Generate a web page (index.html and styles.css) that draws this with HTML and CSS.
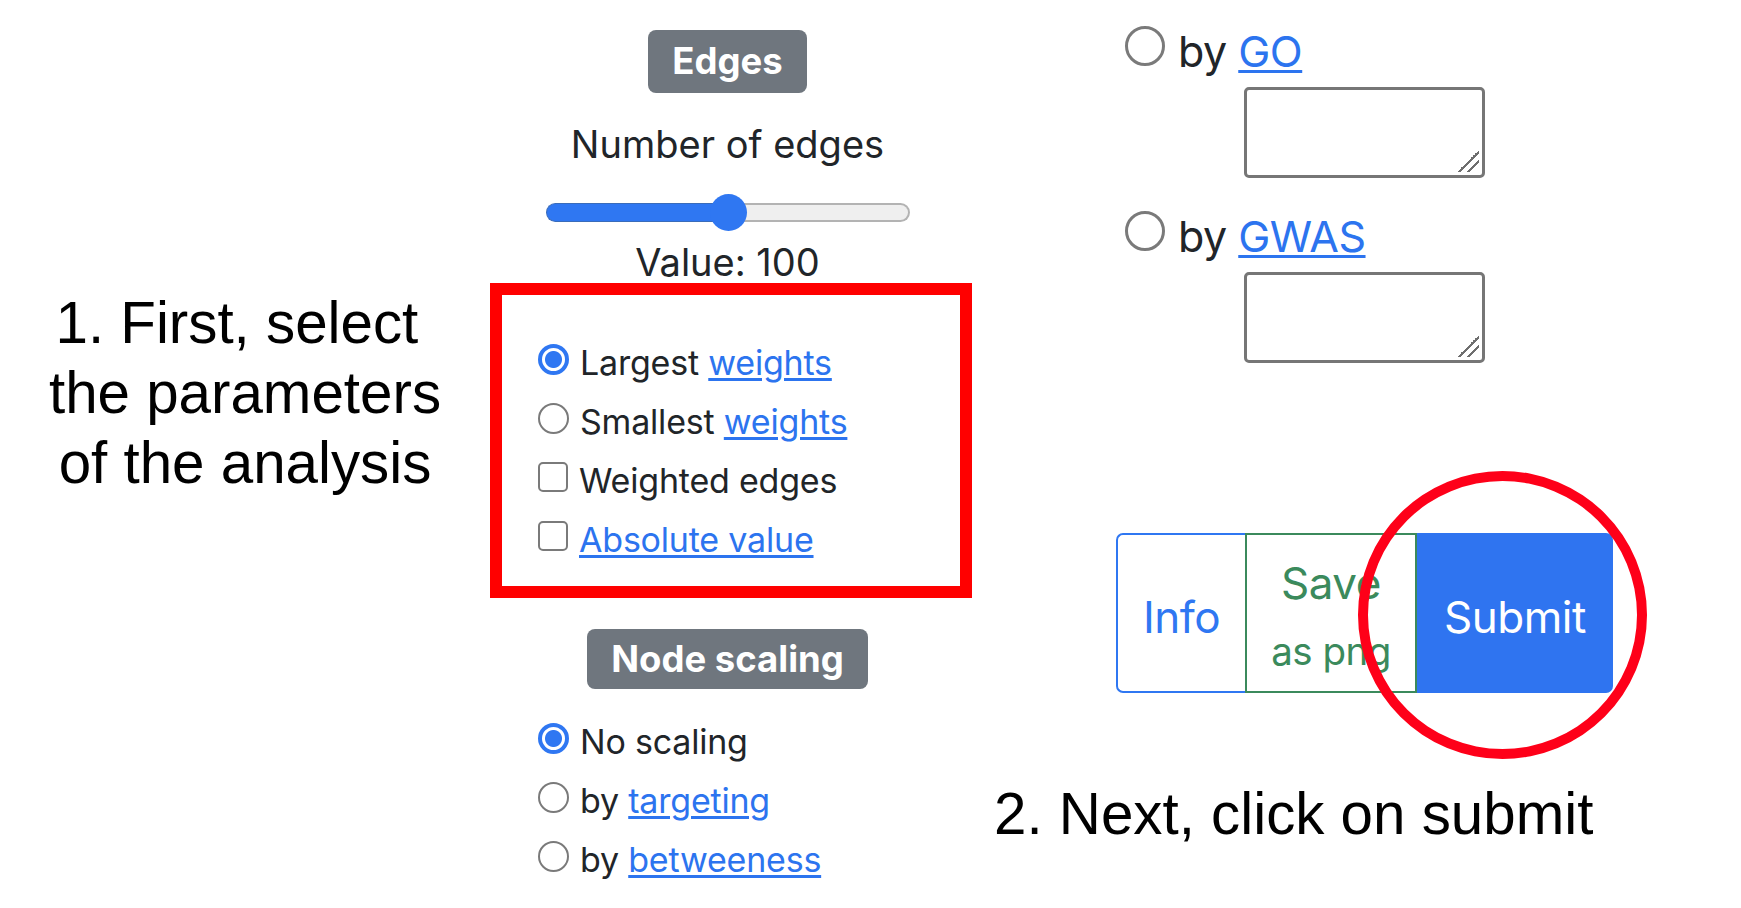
FILE: index.html
```html
<!DOCTYPE html>
<html lang="en">
<head>
<meta charset="utf-8">
<title>Analysis parameters</title>
<link rel="stylesheet" href="styles.css">
</head>
<body>
<div class="canvas">
  <div class="note note-left">1. First, select&nbsp;<br>the parameters<br>of the analysis</div>

  <div class="col-mid">
    <div class="center">
      <span class="badge">Edges</span>
      <div class="label label-num">Number of edges</div>
      <div class="track"><div class="fill"></div><div class="thumb"></div><div class="rest"></div></div>
      <div class="label label-value">Value: 100</div>
    </div>

    <div class="highlight">
      <label class="row"><input class="radio" type="radio" name="w" checked><span>Largest <a href="#">weights</a></span></label>
      <label class="row"><input class="radio" type="radio" name="w"><span>Smallest <a href="#">weights</a></span></label>
      <label class="row"><input class="check" type="checkbox"><span>Weighted edges</span></label>
      <label class="row"><input class="check" type="checkbox"><span><a href="#">Absolute value</a></span></label>
    </div>

    <div class="center center-node">
      <span class="badge">Node scaling</span>
    </div>
    <div class="node-list">
      <label class="row"><input class="radio" type="radio" name="n" checked><span>No scaling</span></label>
      <label class="row"><input class="radio" type="radio" name="n"><span>by <a href="#">targeting</a></span></label>
      <label class="row"><input class="radio" type="radio" name="n"><span>by <a href="#">betweeness</a></span></label>
    </div>
  </div>

  <div class="col-right">
    <label class="opt-row"><input class="radio big" type="radio" name="n"><span>by <a href="#">GO</a></span></label>
    <textarea class="area"></textarea>
    <label class="opt-row opt-second"><input class="radio big" type="radio" name="n"><span>by <a href="#">GWAS</a></span></label>
    <textarea class="area"></textarea>

    <div class="btn-group">
      <button class="btn btn-info" type="button">Info</button>
      <button class="btn btn-save" type="button"><span class="save-top">Save</span><span class="save-sub">as png</span></button>
      <button class="btn btn-submit" type="button">Submit</button>
      <div class="ring"></div>
    </div>

    <div class="note note-bottom">2. Next, click on submit</div>
  </div>
</div>
</body>
</html>
```

FILE: styles.css
```css
html, body {
  margin: 0;
  padding: 0;
  background: #ffffff;
}

.canvas {
  display: flex;
  width: 1741px;
  height: 908px;
  overflow: hidden;
  font-family: "Inter", "Noto Sans", sans-serif;
  color: #212529;
}

.note {
  font-family: "Liberation Sans", Arial, sans-serif;
  font-size: 58.3px;
  line-height: 70px;
  color: #000;
  white-space: nowrap;
}

.note-left {
  flex: 0 0 490px;
  box-sizing: border-box;
  padding-top: 288px;
  text-align: center;
}

/* middle column */
.col-mid {
  flex: 0 0 482px;
  display: flex;
  flex-direction: column;
}

.center {
  padding-top: 30px;
  padding-right: 7px;
  display: flex;
  flex-direction: column;
  align-items: center;
}

.badge {
  display: inline-block;
  background: #6f767e;
  color: #fff;
  font-weight: 700;
  font-size: 36.5px;
  height: 63px;
  line-height: 63px;
  padding: 0 24px;
  border-radius: 8px;
}

.label {
  font-size: 38px;
  line-height: 46px;
  white-space: nowrap;
}

.label-num {
  margin-top: 28px;
}

.track {
  margin-top: 27px;
  width: 364px;
  height: 37px;
  display: flex;
  align-items: center;
}

.fill {
  flex: 0 0 182px;
  height: 19px;
  box-sizing: border-box;
  background: #2f77f2;
  border: 1.5px solid #3a6cba;
  border-right: 0;
  border-radius: 10px 0 0 10px;
  margin-right: -18px;
}

.thumb {
  flex: 0 0 37px;
  height: 37px;
  border-radius: 50%;
  background: #2f77f2;
  position: relative;
  z-index: 1;
}

.rest {
  flex: 1;
  height: 19px;
  box-sizing: border-box;
  background: #efefef;
  border: 2px solid #b3b3b3;
  border-left: 0;
  border-radius: 0 10px 10px 0;
  margin-left: -18px;
}

.label-value {
  margin-top: 10px;
  line-height: 42px;
}

.highlight {
  height: 315px;
  box-sizing: border-box;
  border: 12px solid #ff0000;
  padding: 38px 0 0 36px;
}

.row {
  display: flex;
  align-items: flex-start;
  height: 59px;
  font-size: 34px;
  letter-spacing: -0.2px;
  line-height: 59px;
  white-space: nowrap;
}

.row span {
  margin-left: 11px;
}

a {
  color: #2c74ef;
  text-decoration: underline;
  text-decoration-thickness: 2.5px;
  text-underline-offset: 3px;
}

.radio, .check {
  -webkit-appearance: none;
  appearance: none;
  flex: 0 0 auto;
  margin: 10.5px 0 0 0;
  box-sizing: border-box;
  width: 31px;
  height: 31px;
  background: #fff;
  border: 2.5px solid #7a7a7a;
}

.radio {
  border-radius: 50%;
}

.radio:checked {
  border: 4px solid #2f77f2;
  background: radial-gradient(circle at center, #2f77f2 0 8px, #ffffff 9px);
}

.check {
  border-radius: 5px;
  width: 30px;
  height: 30px;
}

.center-node {
  padding-top: 31px;
}

.center-node .badge {
  height: 60px;
  line-height: 60px;
}

.node-list {
  padding-left: 48px;
  padding-top: 23px;
}

/* right column */
.col-right {
  flex: 1;
  display: flex;
  flex-direction: column;
  align-items: flex-start;
}

.opt-row {
  display: flex;
  align-items: flex-start;
  margin: 23px 0 0 153px;
  height: 56px;
  font-size: 43px;
  letter-spacing: -0.5px;
  line-height: 56px;
  white-space: nowrap;
}

.opt-row span {
  margin-left: 13px;
}

.radio.big {
  width: 40px;
  height: 40px;
  margin-top: 3px;
  border-width: 3px;
}

.opt-second {
  margin-top: 30px;
}

.area {
  display: block;
  margin: 8px 0 0 272px;
  width: 241px;
  height: 91px;
  box-sizing: border-box;
  border: 3px solid #767676;
  border-radius: 5px;
  padding: 0;
  resize: none;
  background-color: #fff;
  background-image: linear-gradient(135deg,
    transparent 0 50%, #6e6e6e 50% 57%,
    transparent 57% 72%, #6e6e6e 72% 79%,
    transparent 79%);
  background-size: 22px 22px;
  background-position: right 3px bottom 3px;
  background-repeat: no-repeat;
}

.btn-group {
  position: relative;
  display: flex;
  margin: 170px 0 0 144px;
  width: 497px;
  height: 160px;
}

.btn {
  margin: 0;
  box-sizing: border-box;
  height: 160px;
  font-family: "Inter", "Noto Sans", sans-serif;
  font-size: 44px;
  letter-spacing: -0.5px;
  line-height: 53px;
  background: #fff;
  padding: 0;
  cursor: pointer;
}

.btn-info {
  flex: 0 0 129px;
  border: 2px solid #2f77f2;
  border-right: 0;
  border-radius: 7px 0 0 7px;
  color: #2f77f2;
  padding-top: 9px;
}

.btn-save {
  flex: 0 0 172px;
  border: 2px solid #3b8a5c;
  color: #3b8a5c;
  display: flex;
  flex-direction: column;
  align-items: center;
  justify-content: flex-start;
  padding-top: 22px;
}

.save-top {
  display: block;
  line-height: 53px;
}

.save-sub {
  display: block;
  font-size: 38.5px;
  line-height: 46px;
  margin-top: 17.5px;
}

.btn-submit {
  flex: 1;
  border: 0;
  background: #2f74f0;
  color: #fff;
  border-radius: 0 7px 7px 0;
  padding-top: 9px;
}

.ring {
  position: absolute;
  left: 242px;
  top: -62px;
  width: 289px;
  height: 288px;
  box-sizing: border-box;
  border: 10px solid #fe0019;
  border-radius: 50%;
  pointer-events: none;
}

.note-bottom {
  margin: 86px 0 0 22px;
}
```
